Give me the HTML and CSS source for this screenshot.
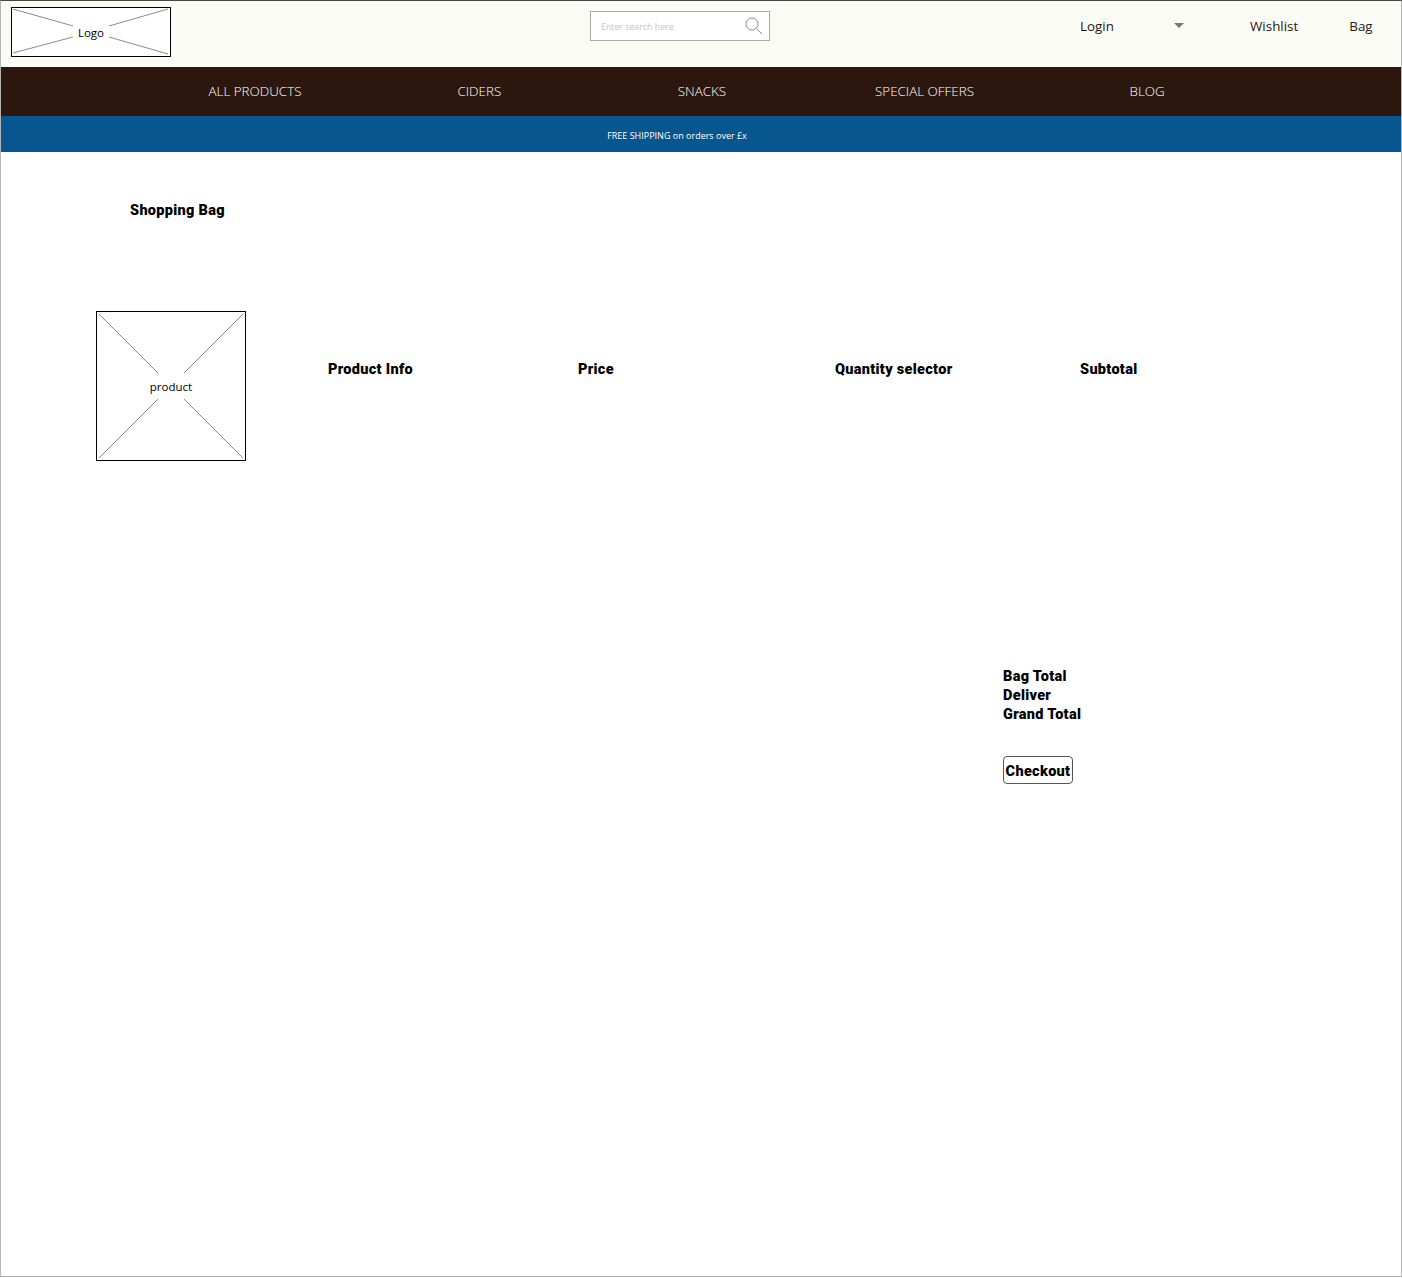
FILE: index.html
```html
<!DOCTYPE html>
<html lang="en">
<head>
    <meta charset="UTF-8">
    <meta name="viewport" content="width=device-width, initial-scale=1.0">
    <title>Shopping Bag</title>
    <link rel="stylesheet" href="styles.css">
</head>
<body>
    <div class="page">
        <header class="topbar">
            <a class="logo placeholder" href="#">
                <svg viewBox="0 0 160 50" width="160" height="50">
                    <line x1="2" y1="2" x2="62" y2="19"></line>
                    <line x1="157" y1="2" x2="98" y2="19"></line>
                    <line x1="2" y1="46" x2="62" y2="30"></line>
                    <line x1="157" y1="47" x2="98" y2="30"></line>
                </svg>
                <span class="placeholder-label">Logo</span>
            </a>
            <form class="search">
                <input type="text" placeholder="Enter search here">
                <svg class="search-icon" viewBox="0 0 18 18" width="18" height="18">
                    <circle cx="7" cy="7" r="6"></circle>
                    <line x1="11.5" y1="11.5" x2="17" y2="17"></line>
                </svg>
            </form>
            <div class="account">
                <a class="login" href="#">Login</a>
                <span class="caret"></span>
                <a class="wishlist" href="#">Wishlist</a>
                <a class="bag" href="#">Bag</a>
            </div>
        </header>

        <nav class="mainnav">
            <a href="#">ALL PRODUCTS</a>
            <a href="#">CIDERS</a>
            <a href="#">SNACKS</a>
            <a href="#">SPECIAL OFFERS</a>
            <a href="#">BLOG</a>
        </nav>

        <div class="promo">FREE SHIPPING on orders over £x</div>

        <main class="content">
            <h1 class="title">Shopping Bag</h1>

            <section class="bag-row">
                <div class="product placeholder">
                    <svg viewBox="0 0 150 150" width="150" height="150">
                        <line x1="3" y1="3" x2="62" y2="62"></line>
                        <line x1="147" y1="3" x2="88" y2="62"></line>
                        <line x1="3" y1="147" x2="62" y2="88"></line>
                        <line x1="147" y1="147" x2="88" y2="88"></line>
                    </svg>
                    <span class="placeholder-label">product</span>
                </div>
                <div class="col-label">Product Info</div>
                <div class="col-label">Price</div>
                <div class="col-label">Quantity selector</div>
                <div class="col-label">Subtotal</div>
            </section>

            <section class="totals">
                <div>Bag Total</div>
                <div>Deliver</div>
                <div>Grand Total</div>
                <button class="checkout" type="button">Checkout</button>
            </section>
        </main>
    </div>
</body>
</html>
```

FILE: styles.css
```css
*{
    padding: 0px;
    margin: 0px;
    box-sizing: border-box;
}
body{
    font-family: "Open Sans", "Noto Sans", sans-serif;
    background-color: white;
    color: black;
}
a{
    color: inherit;
    text-decoration: none;
}
.page{
    height: 1277px;
    border: 1px solid #b4b4b4;
    border-top-color: #444;
    overflow: hidden;
}

/* top bar */
.topbar{
    display: flex;
    height: 66px;
    background-color: #fbfbf6;
    padding: 6px 0px 0px 10px;
}
.logo{
    flex: none;
    width: 160px;
    height: 50px;
    margin-right: 419px;
}
.placeholder{
    position: relative;
    display: flex;
    align-items: center;
    justify-content: center;
    background-color: white;
    border: 1px solid black;
}
.placeholder svg{
    position: absolute;
    left: -1px;
    top: -1px;
}
.placeholder line{
    stroke: #8a8a8a;
    stroke-width: 1;
}
.placeholder-label{
    font-size: 11.5px;
    line-height: 16px;
    padding-top: 2px;
}
.search{
    position: relative;
    flex: none;
    width: 180px;
    height: 30px;
    margin-top: 4px;
}
.search input{
    display: block;
    width: 100%;
    height: 100%;
    border: 1px solid #aaa;
    outline: none;
    padding: 1px 30px 0px 10px;
    font-family: inherit;
    font-size: 8.8px;
    background-color: white;
}
.search input::placeholder{
    color: #c4c4c4;
    opacity: 1;
}
.search-icon{
    position: absolute;
    right: 7px;
    top: 6px;
}
.search-icon circle, .search-icon line{
    fill: none;
    stroke: #8c8c8c;
    stroke-width: 1;
}
.account{
    display: flex;
    align-items: center;
    height: 37px;
    margin-left: 310px;
    font-size: 13.4px;
    color: #2c170f;
}
.login{
    width: 94px;
}
.caret{
    width: 0px;
    height: 0px;
    border-left: 5px solid transparent;
    border-right: 5px solid transparent;
    border-top: 5px solid #777;
    margin-right: 66px;
}
.wishlist{
    margin-right: 51px;
}

/* nav */
.mainnav{
    display: grid;
    grid-template-columns: 226px repeat(4, 222.6px);
    align-items: center;
    height: 49px;
    padding: 0px 0px 1px 141px;
    background-color: #2c170f;
    color: white;
    font-size: 13.4px;
    font-weight: 300;
    text-align: center;
}
.promo{
    height: 36px;
    line-height: 39px;
    padding-right: 48px;
    background-color: #08568f;
    color: white;
    font-size: 9px;
    text-align: center;
}

/* bag */
.content{
    padding-top: 49px;
}
.title, .col-label, .totals, .checkout{
    font-family: Roboto, "Open Sans", sans-serif;
    font-size: 14.5px;
    font-weight: 900;
    line-height: 19px;
    letter-spacing: 0.3px;
}
.title{
    margin-left: 129px;
}
.bag-row{
    display: grid;
    grid-template-columns: 232px 250px 257px 245px auto;
    align-items: start;
    margin-top: 91px;
    margin-left: 95px;
}
.product{
    width: 150px;
    height: 150px;
}
.col-label{
    margin-top: 49px;
}
.totals{
    margin-top: 206px;
    margin-left: 1002px;
}
.checkout{
    display: block;
    width: 70px;
    height: 28px;
    margin-top: 32px;
    padding-top: 2px;
    background-color: white;
    border: 1px solid #555;
    border-radius: 4px;
    color: black;
}
```
